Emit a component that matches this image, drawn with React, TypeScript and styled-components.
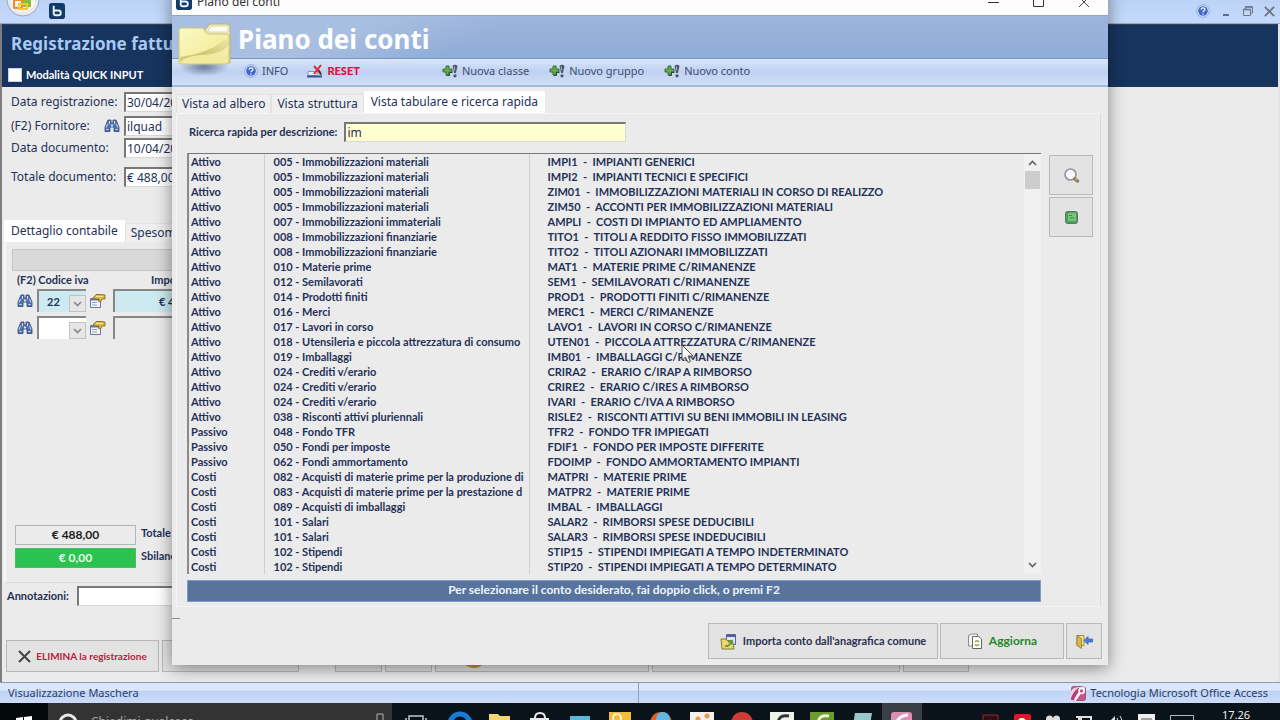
import React from "react";
import styled, { createGlobalStyle } from "styled-components";

const ui = `"Noto Sans", "Open Sans", sans-serif`;
const cal = `Lato, "Noto Sans", sans-serif`;
const ink = "#1f3158";

const Global = createGlobalStyle`
  *, *::before, *::after { box-sizing: border-box; }
  body { margin: 0; font-family: ${ui}; font-size: 12px; line-height: 16px; color: ${ink}; }
  button, input, select { font: inherit; color: inherit; margin: 0; }
  button { cursor: pointer; }
  svg { display: block; flex: none; }
`;

const Desktop = styled.div`
  position: relative;
  display: flex;
  flex-direction: column;
  height: 100vh;
  overflow: hidden;
  background: #ebebeb;
`;

/* ---------- Office window ---------- */

const Ribbon = styled.header`
  display: flex;
  align-items: flex-start;
  height: 24px;
  padding: 0 5px 0 6px;
  background: linear-gradient(#bcd3f7, #c3dafc);
  border-bottom: 1px solid #9aa9c4;
`;
const RibbonSpacer = styled.div`flex: 1;`;
const RibbonLogo = styled.div`margin: 3px 0 0 9px;`;
const RibbonButtons = styled.div`
  display: flex;
  align-items: center;
  gap: 10px;
  height: 22px;
`;
const PlainButton = styled.button`
  display: flex;
  padding: 0;
  border: 0;
  background: none;
`;
const Workspace = styled.main`
  flex: 1;
  display: flex;
  flex-direction: column;
  min-height: 0;
  border-left: 2px solid #7d7d80;
  border-right: 2px solid #e4e4e8;
`;
const FormHeader = styled.div`
  height: 63px;
  padding: 7px 9px 0;
  background: #17345e;
  border-top: 1px solid #3a3f50;
`;
const FormTitle = styled.h1`
  margin: 0;
  font-size: 17px;
  line-height: 24px;
  font-weight: 700;
  color: #a9c9f5;
`;
const QuickInput = styled.label`
  display: flex;
  align-items: center;
  gap: 4px;
  margin: 11px 0 0 -3px;
  font: 700 11px/16px ${cal};
  color: #fff;
`;
const QuickBox = styled.input`
  appearance: none;
  width: 14px;
  height: 14px;
  border: 1px solid #c9d2e0;
  background: #fff;
`;
const Fields = styled.div`
  display: flex;
  flex-direction: column;
  height: 133px;
  padding: 5px 0 0 9px;
`;
const Field = styled.div<{ $gap?: number }>`
  display: grid;
  grid-template-columns: 93px 20px 240px;
  align-items: center;
  margin-top: ${(p) => p.$gap ?? 0}px;
  white-space: nowrap;
`;
const SunkenInput = styled.input`
  width: 100%;
  height: 20px;
  padding: 0 1px;
  border: 1px solid #d8d8d8;
  border-top: 2px solid #77777a;
  border-left: 2px solid #77777a;
  background: #fff;
`;
const TabStrip = styled.div`
  display: flex;
  align-items: flex-end;
  padding-left: 2px;
`;
const Tab = styled.button<{ $active?: boolean }>`
  height: ${(p) => (p.$active ? 22 : 19)}px;
  padding: ${(p) => (p.$active ? "0 6px 2px" : "0 5px")};
  border: 1px solid ${(p) => (p.$active ? "#fff" : "#e2e2e2")};
  border-bottom: 0;
  background: ${(p) => (p.$active ? "#fff" : "#efefef")};
  line-height: 16px;
  white-space: nowrap;
`;
const DetailPanel = styled.section`
  flex: 1;
  display: flex;
  flex-direction: column;
  margin: 0 200px 0 2px;
  padding: 7px 0 14px 6px;
  border-left: 2px solid #f7f7f7;
  border-bottom: 1px solid #dadada;
`;
const GreyBar = styled.div`
  height: 22px;
  background: #d9d9d9;
  border: 1px solid #c4c4c4;
`;
const IvaGrid = styled.div`
  display: grid;
  grid-template-columns: 20px 49px 27px 240px;
  align-items: center;
  row-gap: 4px;
  padding: 20px 0 0 5px;
`;
const IvaHeads = styled.div`
  display: grid;
  grid-template-columns: 134px 1fr;
  margin-bottom: -20px;
  padding: 0 0 0 5px;
  font: 700 11px/18px ${cal};
  white-space: nowrap;
`;
const Combo = styled.div<{ $tint?: string }>`
  display: flex;
  align-items: flex-end;
  height: 23px;
  border-top: 2px solid #88888b;
  border-left: 2px solid #88888b;
  background: ${(p) => p.$tint ?? "#fff"};
`;
const ComboSelect = styled.select`
  appearance: none;
  flex: 1;
  min-width: 0;
  height: 20px;
  padding: 0 0 0 8px;
  border: 0;
  background: none;
  font: 700 11px/16px ${cal};
`;
const ComboArrow = styled.span`
  display: grid;
  place-items: center;
  width: 17px;
  height: 17px;
  border: 1px solid #c2c2c2;
  background: #e6e6e6;
`;
const Cell = styled.div`
  display: flex;
  padding-left: 3px;
`;
const AmountInput = styled.input<{ $tint?: string }>`
  height: 23px;
  padding: 0 0 0 44px;
  border: 0;
  border-top: 2px solid #88888b;
  border-left: 2px solid #88888b;
  background: ${(p) => p.$tint ?? "#ebebeb"};
  font: 700 11px/16px ${cal};
`;
const Totals = styled.div`
  display: grid;
  grid-template-columns: 121px 1fr;
  gap: 3px 5px;
  margin: auto 0 0 3px;
  font: 700 11px/16px ${cal};
`;
const TotalBox = styled.output<{ $ok?: boolean }>`
  height: 20px;
  border: 1px solid ${(p) => (p.$ok ? "#4dbb67" : "#b5b5b8")};
  background: ${(p) => (p.$ok ? "#2cc252" : "#ebebeb")};
  color: ${(p) => (p.$ok ? "#e6ffe9" : "#1c1c1c")};
  font: 700 12px/17px ${cal};
  text-align: center;
`;
const Notes = styled.label`
  display: flex;
  align-items: center;
  gap: 8px;
  margin-right: 200px;
  padding: 3px 0 0 5px;
  font: 700 11px/16px ${cal};
`;
const FormActions = styled.div`
  display: flex;
  gap: 3px;
  padding: 34px 0 10px 4px;
`;
const FormButton = styled.button<{ $w: number; $gap?: number; $start?: boolean }>`
  display: flex;
  align-items: center;
  justify-content: ${(p) => (p.$start ? "flex-start" : "center")};
  gap: 5px;
  flex: none;
  width: ${(p) => p.$w}px;
  height: 32px;
  margin-left: ${(p) => p.$gap ?? 0}px;
  padding: 0 0 0 ${(p) => (p.$start ? 26 : 0)}px;
  border: 1px solid #b8b8ba;
  background: #e3e3e3;
  font: 700 10px/16px ${cal};
  color: #bd1a3b;
  white-space: nowrap;
`;
const StatusBar = styled.footer`
  display: flex;
  align-items: center;
  height: 21px;
  padding: 0 12px 0 8px;
  border-top: 1px solid #8f9bb0;
  background: linear-gradient(#dbe7fb 0 35%, #bdd3f6 40%, #ccdcf8);
  font-size: 11px;
  color: #2b4068;
`;
const StatusHalf = styled.div<{ $end?: boolean }>`
  flex: 1;
  display: flex;
  align-items: center;
  justify-content: ${(p) => (p.$end ? "flex-end" : "flex-start")};
  gap: 4px;
  height: 100%;
  border-left: ${(p) => (p.$end ? "1px solid #8d9fc0" : "0")};
`;

/* ---------- Taskbar ---------- */

const Taskbar = styled.nav`
  display: flex;
  align-items: flex-start;
  height: 17px;
  overflow: hidden;
  background: #0b131a;
`;
const StartButton = styled.button`
  display: flex;
  width: 48px;
  height: 40px;
  padding: 13px 0 0 16px;
  border: 0;
  background: #04090c;
`;
const TaskSearch = styled.div`
  display: flex;
  gap: 13px;
  width: 344px;
  height: 40px;
  padding: 10px 8px 0 10px;
  background: #323332;
  color: #a5a5a5;
  line-height: 18px;
`;
const TaskSearchText = styled.span`flex: 1;`;
const TaskIcons = styled.div`
  display: flex;
`;
const TaskItem = styled.button<{ $active?: boolean; $w?: number }>`
  display: flex;
  justify-content: center;
  width: ${(p) => p.$w ?? 40}px;
  height: 40px;
  padding: 8px 0 0;
  border: 0;
  background: ${(p) => (p.$active ? "#3a3f46" : "none")};
`;
const Tray = styled.div`
  display: flex;
  gap: 15px;
  margin-left: auto;
  padding: 11px 30px 0 0;
`;
const Clock = styled.time`
  margin: -7px 0 0 13px;
  font-size: 11px;
  line-height: 16px;
  color: #f0f0f0;
`;

/* ---------- Dialog ---------- */

const Dialog = styled.section`
  position: absolute;
  top: -12px;
  left: 172px;
  right: 172px;
  display: flex;
  flex-direction: column;
  background: #ebebeb;
  box-shadow: 0 3px 16px rgba(0, 0, 0, 0.45);
`;
const TitleBar = styled.div`
  display: flex;
  align-items: center;
  gap: 5px;
  height: 27px;
  padding: 1px 18px 0 4px;
  background: #fdfdfe;
  color: #333;
`;
const WindowButtons = styled.div`
  display: flex;
  gap: 34px;
  margin-left: auto;
`;
const DialogHead = styled.div`
  position: relative;
  height: 44px;
  padding: 6px 0 0 66px;
  border-top: 1px solid #8ba7cf;
  border-bottom: 1px solid #7c97c0;
  background: linear-gradient(155deg, #a9bfe1 0 20%, rgba(255, 255, 255, 0) 34%), linear-gradient(#9db4dc, #90add8);
`;
const DialogTitle = styled.h2`
  margin: 0;
  font-size: 26px;
  line-height: 34px;
  font-weight: 700;
  color: #fff;
`;
const FolderIcon = styled.div`
  position: absolute;
  top: 5px;
  left: 5px;
`;
const Toolbar = styled.div`
  display: flex;
  align-items: center;
  height: 28px;
  padding: 0 0 3px 72px;
  border-bottom: 2px solid #9dbcdf;
  background: linear-gradient(#d8e6fa, #bed1f1 50%, #d3e0f8);
`;
const ToolButton = styled.button<{ $gap?: number; $alert?: boolean }>`
  display: flex;
  align-items: center;
  gap: 4px;
  margin-left: ${(p) => p.$gap ?? 0}px;
  padding: 0;
  border: 0;
  background: none;
  font-family: ${(p) => (p.$alert ? cal : ui)};
  font-size: 11px;
  font-weight: ${(p) => (p.$alert ? 900 : 400)};
  line-height: 16px;
  color: ${(p) => (p.$alert ? "#e0103c" : "#404d70")};
  white-space: nowrap;
`;
const DialogTabs = styled(TabStrip)`
  padding: 4px 0 0 4px;
`;
const DialogPanel = styled.div`
  margin: 0 7px 0 4px;
  padding: 8px 7px 4px 10px;
  border: 1px solid #f5f5f5;
  border-right-color: #d9d9d9;
`;
const SearchRow = styled.label`
  display: flex;
  align-items: center;
  gap: 7px;
  padding-left: 2px;
  font: 700 11px/16px ${cal};
`;
const SearchInput = styled(SunkenInput)`
  width: 282px;
  background: #ffffcf;
  font: 12px/16px ${ui};
`;
const ListArea = styled.div`
  display: flex;
  align-items: flex-start;
  gap: 8px;
  margin-top: 11px;
`;
const ListColumn = styled.div`
  flex: 1;
  min-width: 0;
`;
const ListBox = styled.div`
  display: grid;
  grid-template-columns: 1fr 17px;
  border-top: 1px solid #77777a;
  border-left: 2px solid #8b8b8f;
`;
const Accounts = styled.table`
  width: 100%;
  border-collapse: collapse;
  table-layout: fixed;
  font: 700 11px/15px ${cal};
`;
const AccountCell = styled.td<{ $pad: number; $line?: boolean }>`
  height: 15px;
  padding: 0 0 0 ${(p) => p.$pad}px;
  border-right: ${(p) => (p.$line ? "1px solid #cfcfd2" : "0")};
  overflow: hidden;
  white-space: pre;
`;
const AccountCol = styled.col<{ $w?: number }>`
  width: ${(p) => (p.$w ? `${p.$w}px` : "auto")};
`;
const ScrollTrack = styled.div`
  display: flex;
  flex-direction: column;
  align-items: center;
  padding: 6px 0;
  background: #f1f1f1;
`;
const ScrollThumb = styled.div`
  width: 15px;
  height: 18px;
  margin: 5px 0 auto;
  background: #cdcdcd;
`;
const Hint = styled.p`
  height: 22px;
  margin: 6px 0 0;
  border: 1px solid #7f9cc9;
  background: #58749d;
  font: 700 12px/18px ${cal};
  color: #eef4ff;
  text-align: center;
`;
const SideButtons = styled.div`
  display: flex;
  flex-direction: column;
  gap: 2px;
  padding-top: 2px;
`;
const GreyButton = styled.button<{ $w: number; $h?: number; $color?: string; $size?: number }>`
  display: flex;
  align-items: center;
  justify-content: center;
  gap: 6px;
  width: ${(p) => p.$w}px;
  height: ${(p) => p.$h ?? 36}px;
  padding: 0;
  border: 1px solid #b9b9bb;
  background: #e3e3e4;
  font: 700 ${(p) => p.$size ?? 11}px/16px ${cal};
  color: ${(p) => p.$color ?? "#2b3050"};
  white-space: nowrap;
`;
const DialogFooter = styled.div`
  display: flex;
  justify-content: flex-end;
  gap: 2px;
  padding: 16px 6px 6px 0;
`;
const FooterMark = styled.div`
  width: 8px;
  height: 1px;
  margin: -5px auto 0 0;
  background: #8a8a8a;
`;
const Pointer = styled.div`
  position: absolute;
  top: 344px;
  left: 681px;
`;

/* ---------- Drawings ---------- */

const BLogo = ({ size = 17 }: { size?: number }) => (
  <svg width={size} height={size} viewBox="0 0 17 17">
    <rect width="17" height="17" rx="3" fill="#123a66" />
    <path d="M5 3v8q0 2 2 2h3q2.500 0 2.500-2.500T10 8H5" fill="none" stroke="#e8f2ff" strokeWidth="2" />
  </svg>
);
const OfficeOrb = () => (
  <svg width="34" height="18" viewBox="0 0 34 18">
    <circle cx="17" cy="0" r="16" fill="#e8eaf0" stroke="#9aa7bd" />
    <circle cx="17" cy="0" r="12" fill="#f9f6ee" />
    <rect x="8" y="0" width="8" height="8" rx="1" fill="none" stroke="#f08a2a" strokeWidth="2" />
    <rect x="17" y="-1" width="8" height="8" rx="1" fill="#86bd3c" />
    <path d="M13 4h8v5h-8z" fill="none" stroke="#f4c534" strokeWidth="2" />
  </svg>
);
const HelpIcon = () => (
  <svg width="14" height="14" viewBox="0 0 14 14">
    <circle cx="7" cy="7" r="6.300" fill="#d7e3fb" stroke="#8ca7dd" />
    <circle cx="7" cy="7" r="4.800" fill="#3f66c8" />
    <path d="M5 5.600q.2-1.800 2-1.800t2 1.500q0 1-1.200 1.700-.8.500-.8 1.200M7 9.500v1.200" fill="none" stroke="#fff" strokeWidth="1.300" />
  </svg>
);
const Binoculars = () => (
  <svg width="16" height="14" viewBox="0 0 16 14">
    <path d="M4 1h3v3h2V1h3l3 7v4.500h-5V8H6v4.500H1V8z" fill="#5573ad" stroke="#2f4577" strokeWidth=".8" />
    <path d="M3.500 5L2 8.500M12.500 5l1.500 3.500M2.500 10.500h2M11.500 10.500h2M5.500 2v3M10.500 2v3" stroke="#cfe0fa" />
    <path d="M7 5.500h2v2H7z" fill="#d9e5f8" />
  </svg>
);
const CardIcon = () => (
  <svg width="17" height="15" viewBox="0 0 17 15">
    <path d="M1.500 5.500h10v9h-10z" fill="#f4f6fc" stroke="#6d7898" />
    <path d="M2 6.500h9" stroke="#5f77b8" strokeWidth="2" />
    <path d="M3 9.500h5M3 12h5" stroke="#8fa0cc" />
    <path d="M4 5l3-3.500h5l4 .5v4h-3l-1.500 3-2-.5.500-2.500H6z" fill="#dcb93b" stroke="#75601f" strokeWidth=".8" />
    <path d="M7 3.500h7" stroke="#f8e79a" />
  </svg>
);
const Chevron = ({ up, color = "#666" }: { up?: boolean; color?: string }) => (
  <svg width="9" height="6" viewBox="0 0 9 6">
    <path d={up ? "M1 5l3.500-3.500L8 5" : "M1 1l3.500 3.500L8 1"} fill="none" stroke={color} strokeWidth="1.700" />
  </svg>
);
const Cross = ({ size = 13, color = "#444", w = 2 }: { size?: number; color?: string; w?: number }) => (
  <svg width={size} height={size} viewBox="0 0 13 13">
    <path d="M1 1l11 11M12 1L1 12" stroke={color} strokeWidth={w} fill="none" />
  </svg>
);
const AddIcon = () => (
  <svg width="16" height="14" viewBox="0 0 16 14">
    <path d="M4 2h3v3h3v3H7v3H4V8H1V5h3z" fill="#62b04a" stroke="#35602f" strokeWidth=".9" />
    <path d="M4.500 11.500h3v-3h3" fill="none" stroke="#2f4a30" />
    <path d="M10.500 2q2.500-2.500 5 0L13.900 9h-1.800z" fill="#4a556c" />
    <circle cx="13" cy="11.800" r="1.600" fill="#4a556c" />
    <path d="M12.300 2.500l.4 4" stroke="#a9b5cc" />
  </svg>
);
const ResetIcon = () => (
  <svg width="16" height="14" viewBox="0 0 16 14">
    <path d="M1 7.500h9v4H1z" fill="#e7ecf9" stroke="#7f93c3" />
    <path d="M0 12.500h15" stroke="#38538f" strokeWidth="2" />
    <path d="M7 2l7 8M14 1L7 10" stroke="#dd2a33" strokeWidth="2" />
    <path d="M12 6l2 5" stroke="#4a3338" strokeWidth="1.500" />
  </svg>
);
const Folder = () => (
  <svg width="54" height="56" viewBox="0 0 54 56">
    <defs>
      <linearGradient id="front" x1="0" y1="0" x2="1" y2="1">
        <stop offset="0" stopColor="#fbf8c6" />
        <stop offset="1" stopColor="#f1e98c" />
      </linearGradient>
      <linearGradient id="wave" x1="0" y1="1" x2="1" y2="0">
        <stop offset="0" stopColor="#d3cc74" />
        <stop offset=".45" stopColor="#cfc873" />
        <stop offset="1" stopColor="#efe9a4" />
      </linearGradient>
      <radialGradient id="drop">
        <stop offset="0" stopColor="#4f5f80" stopOpacity=".75" />
        <stop offset="1" stopColor="#4f5f80" stopOpacity="0" />
      </radialGradient>
    </defs>
    <ellipse cx="27" cy="46" rx="25" ry="9" fill="url(#drop)" />
    <path d="M28 9l5-6h17q3 0 3 3v36H28z" fill="#f1edc4" stroke="#b9b07a" />
    <path d="M31 9l4-4h16v6H31z" fill="#fffdf0" stroke="#c9c193" strokeWidth=".6" />
    <path d="M2 9q0-2 2-2h21q2 0 3 3t4 3h17q3 0 3 2v26q0 2-3 2H5q-3 0-3-2z" fill="url(#front)" stroke="#cdc47c" />
    <path d="M3 36Q34 32 51 16v23q0 3-3 3H6q-3 0-3-3z" fill="url(#wave)" />
    <path d="M4 41Q8 35 26 34t25-9v15q0 2-2 2H5z" fill="#fbf6b0" opacity=".75" />
  </svg>
);
const Magnifier = () => (
  <svg width="17" height="17" viewBox="0 0 17 17">
    <circle cx="7.500" cy="7.500" r="5.500" fill="#f7f9fc" stroke="#8f959c" strokeWidth="1.600" />
    <path d="M12 12l2.500 2" stroke="#85794d" strokeWidth="3.500" strokeLinecap="round" />
    <path d="M12.500 12l1.500 1" stroke="#e0d7a0" strokeWidth="1.200" />
  </svg>
);
const GreenBook = () => (
  <svg width="13" height="13" viewBox="0 0 13 13">
    <rect x=".5" y=".5" width="12" height="12" rx="2" fill="#4e9e5c" stroke="#5d7561" />
    <rect x="3" y="2" width="8" height="8" fill="#74c47e" />
    <path d="M4 4.500h3M5 7h4" stroke="#3b8a4b" />
  </svg>
);
const ImportIcon = () => (
  <svg width="17" height="17" viewBox="0 0 17 17">
    <path d="M6.500 1.500h9v10h-9z" fill="#dfe6fa" stroke="#5a6698" />
    <path d="M6 3h10" stroke="#4f5f9c" strokeWidth="2" />
    <path d="M1 6h5l1 1.500h5.500L14 16H2z" fill="#ecd76f" stroke="#8b7a34" />
    <path d="M5 13q4 1 6-4M8 9l3.500-1 .5 3.500" fill="none" stroke="#5c9a3a" strokeWidth="1.800" />
  </svg>
);
const RefreshDoc = () => (
  <svg width="16" height="16" viewBox="0 0 16 16">
    <path d="M1.500 2.500l3-1.500h6v12l-9 0z" fill="#f4f4f4" stroke="#8b8b8b" />
    <path d="M5.500 3.500h6l3 2.500v9.500h-9z" fill="#fff" stroke="#666" />
    <path d="M8 9q2-2.500 4 0M12 11.500q-2 2-4 0" fill="none" stroke="#80a843" strokeWidth="1.500" />
  </svg>
);
const ExitIcon = () => (
  <svg width="17" height="15" viewBox="0 0 17 15">
    <path d="M1 1.500h7v10H1z" fill="#f3e6a2" stroke="#a38a3b" />
    <path d="M1 1.500l4.500 3v10L1 11.500z" fill="#dcb94c" stroke="#8e7630" strokeWidth=".8" />
    <path d="M8 6.500l4-4v2.500h4.500v3H12v2.500z" fill="#4d7fe0" stroke="#2c56ac" strokeWidth=".7" />
  </svg>
);
const AccessLogo = () => (
  <svg width="15" height="15" viewBox="0 0 15 15">
    <rect x=".5" y=".5" width="14" height="14" rx="2" fill="#c4568a" stroke="#a5517c" />
    <path d="M0 15V5q2-4 9-4l5-1v6l-5 2-4 7z" fill="#f4cfe0" />
    <path d="M1.500 14q1-6 7-11" stroke="#b23c74" strokeWidth="3.500" fill="none" />
    <path d="M4 14l5-7" stroke="#fff" strokeWidth="2" />
    <circle cx="10.500" cy="5" r="2.500" fill="#c4568a" stroke="#fff" strokeWidth="1.600" />
  </svg>
);

const taskGlyphs: { w?: number; active?: boolean; label: string; art: React.ReactNode }[] = [
  { label: "Visualizzazione attività", w: 48, art: <path d="M5 5h14v15H5zM1 8h2M21 8h2" fill="none" stroke="#c8c8c8" strokeWidth="1.500" /> },
  { label: "Edge", art: <path d="M2 13a10 10 0 0 1 20 0v2H8" fill="none" stroke="#1a7bd4" strokeWidth="5" /> },
  { label: "Esplora file", art: <path d="M1 3h9l2 2h10v16H1z" fill="#f3d775" /> },
  { label: "Store", art: <><path d="M2 7h19v14H2z" fill="#e9e9e9" /><path d="M7 7q0-5 5-5t5 5" fill="none" stroke="#e9e9e9" strokeWidth="2" /></> },
  { label: "Monitor", art: <path d="M2 5h20v14H2z" fill="#5cb8d6" /> },
  { label: "Outlook", art: <><path d="M1 1h22v20H1z" fill="#f2bd3d" /><circle cx="9" cy="7" r="4" fill="none" stroke="#fff3c8" strokeWidth="2" /></> },
  { label: "Firefox", w: 42, art: <><circle cx="12" cy="12" r="11" fill="#e0602a" /><circle cx="14" cy="8" r="7" fill="#63b7e4" /></> },
  { label: "Foto", art: <><path d="M0 1h24v20H0z" fill="#f5f1ea" /><circle cx="8" cy="8" r="2.500" fill="#e29a52" /><circle cx="17" cy="5" r="2.500" fill="#e29a52" /></> },
  { label: "Chrome", art: <><circle cx="12" cy="12" r="11" fill="#cf3c38" /><circle cx="12" cy="14" r="5" fill="#ddd" /></> },
  { label: "Camtasia", art: <><path d="M0 1h24v20H0z" fill="#eef3e8" /><path d="M19 5q-10-2-11 7" fill="none" stroke="#333" strokeWidth="3" /></> },
  { label: "Camtasia Studio", art: <><path d="M0 1h24v20H0z" fill="#6c9b2d" /><path d="M19 5q-10-2-11 7" fill="none" stroke="#eef6df" strokeWidth="3" /></> },
  { label: "Note", art: <path d="M5 2h17l-3 18H2z" fill="#9cc7c8" /> },
  { label: "Access", active: true, art: <><rect x="1" y="1" width="21" height="20" rx="3" fill="#dd8fb5" /><path d="M6 12q4-8 12-8" stroke="#fff" strokeWidth="3" fill="none" /></> },
];

/* ---------- Data ---------- */

const accounts: [string, string, string][] = [
  ["Attivo", "005 - Immobilizzazioni materiali", "IMPI1  -  IMPIANTI GENERICI"],
  ["Attivo", "005 - Immobilizzazioni materiali", "IMPI2  -  IMPIANTI TECNICI E SPECIFICI"],
  ["Attivo", "005 - Immobilizzazioni materiali", "ZIM01  -  IMMOBILIZZAZIONI MATERIALI IN CORSO DI REALIZZO"],
  ["Attivo", "005 - Immobilizzazioni materiali", "ZIM50  -  ACCONTI PER IMMOBILIZZAZIONI MATERIALI"],
  ["Attivo", "007 - Immobilizzazioni immateriali", "AMPLI  -  COSTI DI IMPIANTO ED AMPLIAMENTO"],
  ["Attivo", "008 - Immobilizzazioni finanziarie", "TITO1  -  TITOLI A REDDITO FISSO IMMOBILIZZATI"],
  ["Attivo", "008 - Immobilizzazioni finanziarie", "TITO2  -  TITOLI AZIONARI IMMOBILIZZATI"],
  ["Attivo", "010 - Materie prime", "MAT1  -  MATERIE PRIME C/RIMANENZE"],
  ["Attivo", "012 - Semilavorati", "SEM1  -  SEMILAVORATI C/RIMANENZE"],
  ["Attivo", "014 - Prodotti finiti", "PROD1  -  PRODOTTI FINITI C/RIMANENZE"],
  ["Attivo", "016 - Merci", "MERC1  -  MERCI C/RIMANENZE"],
  ["Attivo", "017 - Lavori in corso", "LAVO1  -  LAVORI IN CORSO C/RIMANENZE"],
  ["Attivo", "018 - Utensileria e piccola attrezzatura di consumo", "UTEN01  -  PICCOLA ATTREZZATURA C/RIMANENZE"],
  ["Attivo", "019 - Imballaggi", "IMB01  -  IMBALLAGGI C/RIMANENZE"],
  ["Attivo", "024 - Crediti v/erario", "CRIRA2  -  ERARIO C/IRAP A RIMBORSO"],
  ["Attivo", "024 - Crediti v/erario", "CRIRE2  -  ERARIO C/IRES A RIMBORSO"],
  ["Attivo", "024 - Crediti v/erario", "IVARI  -  ERARIO C/IVA A RIMBORSO"],
  ["Attivo", "038 - Risconti attivi pluriennali", "RISLE2  -  RISCONTI ATTIVI SU BENI IMMOBILI IN LEASING"],
  ["Passivo", "048 - Fondo TFR", "TFR2  -  FONDO TFR IMPIEGATI"],
  ["Passivo", "050 - Fondi per imposte", "FDIF1  -  FONDO PER IMPOSTE DIFFERITE"],
  ["Passivo", "062 - Fondi ammortamento", "FDOIMP  -  FONDO AMMORTAMENTO IMPIANTI"],
  ["Costi", "082 - Acquisti di materie prime per la produzione di", "MATPRI  -  MATERIE PRIME"],
  ["Costi", "083 - Acquisti di materie prime per la prestazione d", "MATPR2  -  MATERIE PRIME"],
  ["Costi", "089 - Acquisti di imballaggi", "IMBAL  -  IMBALLAGGI"],
  ["Costi", "101 - Salari", "SALAR2  -  RIMBORSI SPESE DEDUCIBILI"],
  ["Costi", "101 - Salari", "SALAR3  -  RIMBORSI SPESE INDEDUCIBILI"],
  ["Costi", "102 - Stipendi", "STIP15  -  STIPENDI IMPIEGATI A TEMPO INDETERMINATO"],
  ["Costi", "102 - Stipendi", "STIP20  -  STIPENDI IMPIEGATI A TEMPO DETERMINATO"],
];

const OfficeWindow = () => (
  <>
    <Ribbon>
      <OfficeOrb />
      <RibbonLogo><BLogo size={16} /></RibbonLogo>
      <RibbonSpacer />
      <RibbonButtons>
        <PlainButton aria-label="Guida"><HelpIcon /></PlainButton>
        <PlainButton aria-label="Riduci">
          <svg width="12" height="12"><path d="M3 10h6" stroke="#5c6b8a" strokeWidth="2" /></svg>
        </PlainButton>
        <PlainButton aria-label="Ripristina">
          <svg width="12" height="12" viewBox="0 0 12 12"><path d="M1.500 4.500h7v6h-7zM3.500 4V2h7v6H9" fill="none" stroke="#6b7690" /><path d="M3 2h8M1 4.500h8" stroke="#6b7690" strokeWidth="1.500" /></svg>
        </PlainButton>
        <PlainButton aria-label="Chiudi"><Cross size={11} color="#6b7385" w={2} /></PlainButton>
      </RibbonButtons>
    </Ribbon>
    <Workspace>
      <FormHeader>
        <FormTitle>Registrazione fattura</FormTitle>
        <QuickInput><QuickBox type="checkbox" />Modalità QUICK INPUT</QuickInput>
      </FormHeader>
      <Fields>
        <Field>
          <label htmlFor="dreg">Data registrazione:</label><span />
          <SunkenInput id="dreg" defaultValue="30/04/2016" />
        </Field>
        <Field $gap={4}>
          <label htmlFor="forn">(F2) Fornitore:</label><Binoculars />
          <SunkenInput id="forn" defaultValue="ilquad" />
        </Field>
        <Field $gap={2}>
          <label htmlFor="ddoc">Data documento:</label><span />
          <SunkenInput id="ddoc" defaultValue="10/04/2016" />
        </Field>
        <Field $gap={9}>
          <label htmlFor="tot">Totale documento:</label><span />
          <SunkenInput id="tot" defaultValue="€ 488,00" />
        </Field>
      </Fields>
      <TabStrip>
        <Tab $active>Dettaglio contabile</Tab>
        <Tab>Spesometro</Tab>
      </TabStrip>
      <DetailPanel>
        <GreyBar />
        <IvaHeads><span>(F2) Codice iva</span><span>Imponibile</span></IvaHeads>
        <IvaGrid>
          <Binoculars />
          <Combo $tint="#cdeaf0">
            <ComboSelect aria-label="Codice iva" defaultValue="22"><option>22</option></ComboSelect>
            <ComboArrow><Chevron color="#888" /></ComboArrow>
          </Combo>
          <Cell><CardIcon /></Cell>
          <AmountInput aria-label="Imponibile" $tint="#cdeaf0" defaultValue="€ 400,00" />
          <Binoculars />
          <Combo>
            <ComboSelect aria-label="Codice iva, riga 2" />
            <ComboArrow><Chevron color="#888" /></ComboArrow>
          </Combo>
          <Cell><CardIcon /></Cell>
          <AmountInput aria-label="Imponibile, riga 2" />
        </IvaGrid>
        <Totals>
          <TotalBox>€ 488,00</TotalBox><span>Totale</span>
          <TotalBox $ok>€ 0,00</TotalBox><span>Sbilancio</span>
        </Totals>
      </DetailPanel>
      <Notes>Annotazioni:<SunkenInput /></Notes>
      <FormActions>
        <FormButton $w={153}><Cross />ELIMINA la registrazione</FormButton>
        <FormButton $w={137} aria-label="Stampa" />
        <FormButton $w={47} $gap={33} aria-label="Precedente" />
        <FormButton $w={47} aria-label="Successivo" />
        <FormButton $w={214} $start aria-label="Salva">
          <svg width="24" height="24"><circle cx="12" cy="12" r="12" fill="#c98f3c" /></svg>
        </FormButton>
        <FormButton $w={248} aria-label="Nuova" />
        <FormButton $w={66} aria-label="Esci" />
      </FormActions>
    </Workspace>
    <StatusBar>
      <StatusHalf>Visualizzazione Maschera</StatusHalf>
      <StatusHalf $end><AccessLogo />Tecnologia Microsoft Office Access</StatusHalf>
    </StatusBar>
  </>
);

const PianoDeiConti = () => (
  <Dialog role="dialog" aria-label="Piano dei conti">
    <TitleBar>
      <BLogo size={16} />
      <span>Piano dei conti</span>
      <WindowButtons>
        <PlainButton aria-label="Riduci"><svg width="11" height="11"><path d="M0 6.500h11" stroke="#333" /></svg></PlainButton>
        <PlainButton aria-label="Ingrandisci"><svg width="11" height="11"><path d="M.5.5h10v10H.5z" fill="none" stroke="#333" /></svg></PlainButton>
        <PlainButton aria-label="Chiudi"><Cross size={12} color="#333" w={1} /></PlainButton>
      </WindowButtons>
    </TitleBar>
    <DialogHead>
      <DialogTitle>Piano dei conti</DialogTitle>
      <FolderIcon><Folder /></FolderIcon>
    </DialogHead>
    <Toolbar>
      <ToolButton><HelpIcon />INFO</ToolButton>
      <ToolButton $gap={19} $alert><ResetIcon />RESET</ToolButton>
      <ToolButton $gap={82}><AddIcon />Nuova classe</ToolButton>
      <ToolButton $gap={20}><AddIcon />Nuovo gruppo</ToolButton>
      <ToolButton $gap={20}><AddIcon />Nuovo conto</ToolButton>
    </Toolbar>
    <DialogTabs>
      <Tab>Vista ad albero</Tab>
      <Tab>Vista struttura</Tab>
      <Tab $active>Vista tabulare e ricerca rapida</Tab>
    </DialogTabs>
    <DialogPanel>
      <SearchRow>
        Ricerca rapida per descrizione:
        <SearchInput defaultValue="im" />
      </SearchRow>
      <ListArea>
        <ListColumn>
          <ListBox>
            <Accounts>
              <colgroup>
                <AccountCol $w={75} />
                <AccountCol $w={265} />
                <AccountCol />
              </colgroup>
              <tbody>
                {accounts.map(([kind, group, account], i) => (
                  <tr key={i}>
                    <AccountCell $pad={2} $line>{kind}</AccountCell>
                    <AccountCell $pad={9} $line>{group}</AccountCell>
                    <AccountCell $pad={18}>{account}</AccountCell>
                  </tr>
                ))}
              </tbody>
            </Accounts>
            <ScrollTrack>
              <Chevron up /><ScrollThumb /><Chevron />
            </ScrollTrack>
          </ListBox>
          <Hint>Per selezionare il conto desiderato, fai doppio click, o premi F2</Hint>
        </ListColumn>
        <SideButtons>
          <GreyButton $w={44} $h={40} aria-label="Cerca"><Magnifier /></GreyButton>
          <GreyButton $w={44} $h={40} aria-label="Esporta"><GreenBook /></GreyButton>
        </SideButtons>
      </ListArea>
    </DialogPanel>
    <DialogFooter>
      <FooterMark />
      <GreyButton $w={230}><ImportIcon />Importa conto dall'anagrafica comune</GreyButton>
      <GreyButton $w={124} $color="#1d8a24" $size={12}><RefreshDoc />Aggiorna</GreyButton>
      <GreyButton $w={36} aria-label="Esci"><ExitIcon /></GreyButton>
    </DialogFooter>
  </Dialog>
);

const WindowsTaskbar = () => (
  <Taskbar>
    <StartButton aria-label="Start">
      <svg width="16" height="16" viewBox="0 0 16 16"><path d="M0 2l7-1v6H0zM8 1l8-1v7H8zM0 8h7v6l-7-1zM8 8h8v8l-8-1z" fill="#fff" /></svg>
    </StartButton>
    <TaskSearch>
      <svg width="20" height="20"><circle cx="10" cy="10" r="8" fill="none" stroke="#e8e8e8" strokeWidth="3" /></svg>
      <TaskSearchText>Chiedimi qualcosa</TaskSearchText>
      <svg width="8" height="16"><path d="M1 1h6v9H1z" fill="none" stroke="#b5b5b5" /></svg>
    </TaskSearch>
    <TaskIcons>
      {taskGlyphs.map((g) => (
        <TaskItem key={g.label} aria-label={g.label} $active={g.active} $w={g.w}>
          <svg width="24" height="24">{g.art}</svg>
        </TaskItem>
      ))}
    </TaskIcons>
    <Tray>
      <svg width="17" height="16"><path d="M1 1h15v14H1z" fill="#2a1014" stroke="#a32234" /><path d="M4 9l4-3 5 2" stroke="#d24" fill="none" /></svg>
      <svg width="17" height="16"><rect width="17" height="16" rx="2" fill="#e1162a" /><circle cx="8" cy="8" r="4" fill="#fff" /></svg>
      <svg width="14" height="16"><circle cx="3.500" cy="5" r="3.500" fill="#ddd" /><circle cx="10.500" cy="5" r="3.500" fill="#ddd" /></svg>
      <svg width="17" height="16"><path d="M1 3h3v8M6 3h10v7H6z" fill="none" stroke="#ddd" strokeWidth="2" /></svg>
      <svg width="16" height="16"><path d="M1 6h3l4-4v12l-4-4H1z" fill="#ddd" /><path d="M10 4q3 4 0 8M13 2q4 6 0 12" fill="none" stroke="#ddd" /></svg>
      <svg width="17" height="16"><path d="M0 0h17v14H0z" fill="#eee" /><path d="M3 5h11M3 9h11" stroke="#555" /></svg>
      <svg width="24" height="16"><path d="M.5 1.500h23v12H.5z" fill="none" stroke="#bbb" /></svg>
      <Clock>17.26</Clock>
    </Tray>
  </Taskbar>
);

export default function App() {
  return (
    <Desktop>
      <Global />
      <OfficeWindow />
      <WindowsTaskbar />
      <PianoDeiConti />
      <Pointer>
        <svg width="13" height="20" viewBox="0 0 13 20">
          <path d="M1 1v15l3.500-3 2.500 5.500 2.500-1L7 12h5z" fill="#fff" stroke="#555" />
        </svg>
      </Pointer>
    </Desktop>
  );
}
